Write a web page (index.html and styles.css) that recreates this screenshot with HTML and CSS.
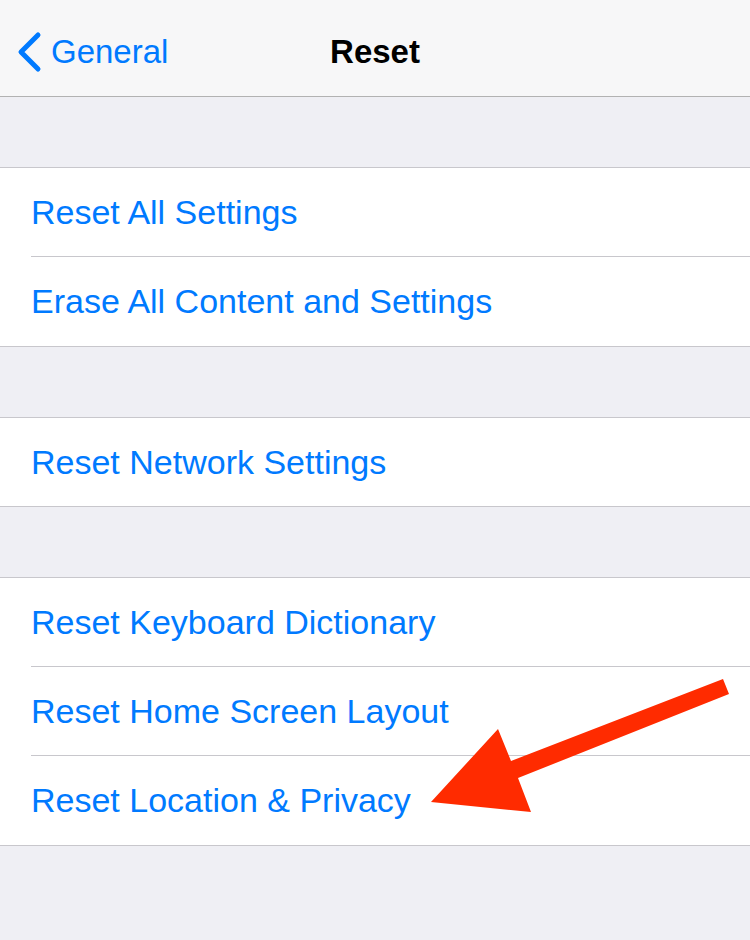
FILE: index.html
```html
<!DOCTYPE html>
<html lang="en">
<head>
  <meta charset="UTF-8" />
  <meta name="viewport" content="width=device-width, initial-scale=1.0"/>
  <title>Reset</title>
  <link rel="stylesheet" href="styles.css">
</head>
<body>
  <header class="navbar">
    <a href="#" class="back">
      <svg class="chevron" width="26" height="42" viewBox="0 0 26 42">
        <path d="M22 4 L5 21 L22 38" fill="none" stroke="#007aff" stroke-width="5" stroke-linecap="round" stroke-linejoin="round"/>
      </svg>
      <span>General</span>
    </a>
    <h1 class="title">Reset</h1>
  </header>

  <main class="content">
    <ul class="group">
      <li><a href="#">Reset All Settings</a></li>
      <li><a href="#">Erase All Content and Settings</a></li>
    </ul>

    <ul class="group short">
      <li><a href="#">Reset Network Settings</a></li>
    </ul>

    <ul class="group">
      <li><a href="#">Reset Keyboard Dictionary</a></li>
      <li><a href="#">Reset Home Screen Layout</a></li>
      <li><a href="#">Reset Location &amp; Privacy</a></li>
    </ul>
  </main>

  <!-- flecha roja encima de la lista -->
  <svg class="arrow" width="750" height="940" viewBox="0 0 750 940">
    <polygon points="723,679 729,694 518,778 531,812 431,802 498,729 511,761" fill="#ff2b00"/>
  </svg>
</body>
</html>
```

FILE: styles.css
```css
* {
  box-sizing: border-box;
  margin: 0;
  padding: 0;
}

body {
  font-family: 'Liberation Sans', Arial, sans-serif;
  background-color: #efeff4;
  width: 750px;
  height: 940px;
  overflow: hidden;
  position: relative;
}

.navbar {
  height: 97px;
  background-color: #f7f7f8;
  border-bottom: 1px solid #b2b2b2;
  display: flex;
  align-items: center;
  justify-content: center;
  position: relative;
  padding-top: 8px;
}

.back {
  position: absolute;
  left: 16px;
  top: 31px;
  display: flex;
  align-items: center;
  gap: 9px;
  color: #007aff;
  text-decoration: none;
  font-size: 33px;
}

.back span {
  line-height: 42px;
}

.title {
  font-size: 33px;
  font-weight: bold;
  color: #000;
  line-height: 42px;
}

.content {
  padding-top: 70px;
}

.group {
  list-style: none;
  background-color: #fff;
  border-top: 1px solid #c8c7cc;
  border-bottom: 1px solid #c8c7cc;
  margin-bottom: 70px;
  padding-left: 31px;
}

.group li {
  height: 89px;
  display: flex;
  align-items: center;
  border-bottom: 1px solid #c8c7cc;
}

.group li:last-child {
  border-bottom: none;
}

.group.short li {
  height: 88px;
}

.group li a {
  color: #007aff;
  text-decoration: none;
  font-size: 34px;
}

.arrow {
  position: absolute;
  top: 0;
  left: 0;
  pointer-events: none;
}
```
